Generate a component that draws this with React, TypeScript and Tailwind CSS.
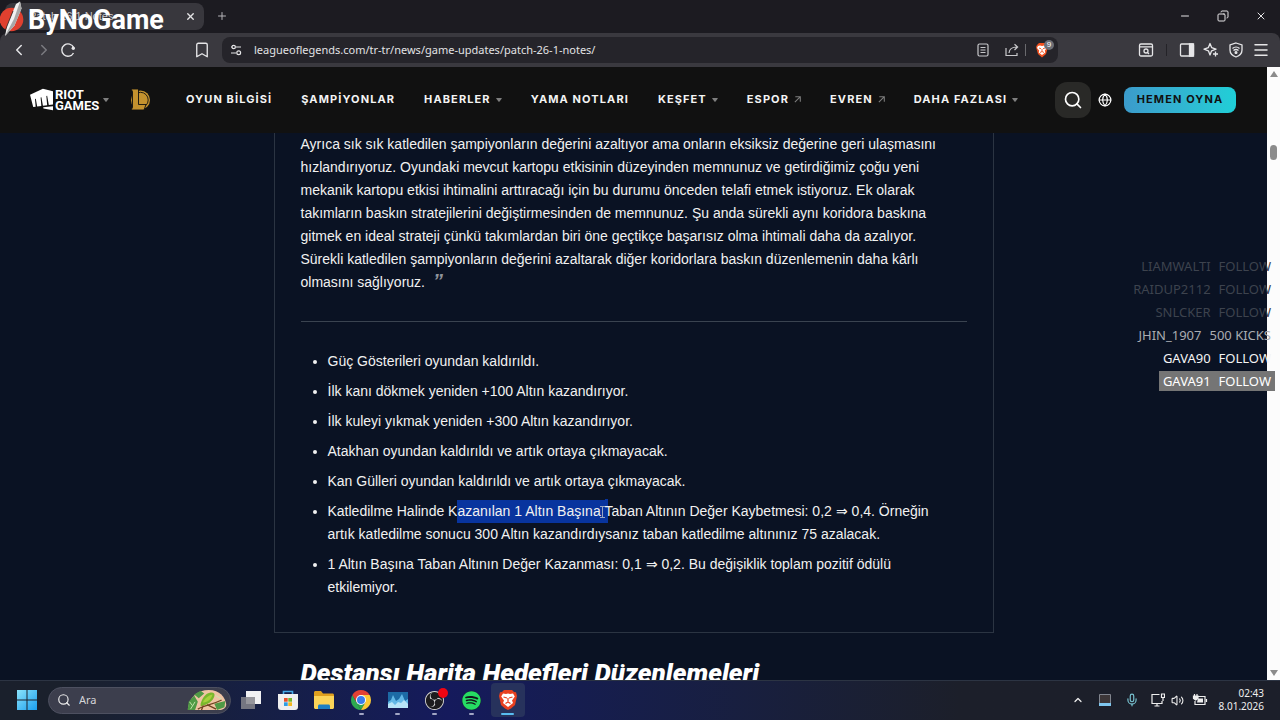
import type { ReactNode } from 'react';
import {
	Bookmark,
	ChevronLeft,
	ChevronRight,
	ChevronUp,
	Copy,
	Globe,
	Menu,
	Mic,
	Minus,
	Plus,
	Search,
	Volume2,
	X,
} from 'lucide-react';
import { FaSpotify } from 'react-icons/fa';
import { SiObsstudio, SiRiotgames } from 'react-icons/si';

type NavItem = {
	label: string;
	kind?: 'menu' | 'external';
};

const navItems: NavItem[] = [
	{ label: 'OYUN BİLGİSİ' },
	{ label: 'ŞAMPİYONLAR' },
	{ label: 'HABERLER', kind: 'menu' },
	{ label: 'YAMA NOTLARI' },
	{ label: 'KEŞFET', kind: 'menu' },
	{ label: 'ESPOR', kind: 'external' },
	{ label: 'EVREN', kind: 'external' },
	{ label: 'DAHA FAZLASI', kind: 'menu' },
];

const quoteLines = [
	'Ayrıca sık sık katledilen şampiyonların değerini azaltıyor ama onların eksiksiz değerine geri ulaşmasını',
	'hızlandırıyoruz. Oyundaki mevcut kartopu etkisinin düzeyinden memnunuz ve getirdiğimiz çoğu yeni',
	'mekanik kartopu etkisi ihtimalini arttıracağı için bu durumu önceden telafi etmek istiyoruz. Ek olarak',
	'takımların baskın stratejilerini değiştirmesinden de memnunuz. Şu anda sürekli aynı koridora baskına',
	'gitmek en ideal strateji çünkü takımlardan biri öne geçtikçe başarısız olma ihtimali daha da azalıyor.',
	'Sürekli katledilen şampiyonların değerini azaltarak diğer koridorlara baskın düzenlemenin daha kârlı',
];

const events = [
	{ user: 'LIAMWALTI', action: 'FOLLOW', className: 'text-[#3d434e]' },
	{ user: 'RAIDUP2112', action: 'FOLLOW', className: 'text-[#3d434e]' },
	{ user: 'SNLCKER', action: 'FOLLOW', className: 'text-[#3d434e]' },
	{ user: 'JHIN_1907', action: '500 KICKS', className: 'text-[#a9acb1]' },
	{ user: 'GAVA90', action: 'FOLLOW', className: 'text-[#f4f4f4]' },
	{ user: 'GAVA91', action: 'FOLLOW', className: 'bg-[#757575] text-white' },
];

const Caret = () => (
	<svg viewBox="0 0 7 5" className="h-1 w-[6px] shrink-0" fill="#7e7e7e">
		<path d="M.6 0h5.800c.5 0 .7.6.4 1L4 4.600c-.3.3-.7.3-1 0L.2 1C-.1.600.1 0 .6 0z" />
	</svg>
);

const ExternalArrow = () => (
	<svg viewBox="0 0 8 8" className="h-[7px] w-[7px] shrink-0" fill="none" stroke="#7e7e7e" strokeWidth="1.200">
		<path d="M1 7l6-6M1.500 .8h5.700v5.700" />
	</svg>
);

const StreamLogo = () => (
	<div className="pointer-events-none absolute left-0 top-0 flex items-center">
		<svg viewBox="0 0 28 36" className="h-9 w-7 shrink-0">
			<circle cx="11.500" cy="18.500" r="11.800" fill="#e0402f" />
			<path d="M16 3l4-2.500 1.500 7-7 17L5 35l2-10z" fill="#f2f2f2" />
			<path d="M20 .5l1.500 7-7 17L5 35l9-17z" fill="#a8a8a8" />
			<path d="M13 10L5 30" stroke="#222" strokeWidth=".8" />
		</svg>
		<span className="pt-[2px] font-[Roboto,sans-serif] text-[27px] leading-9 font-bold text-white">ByNoGame</span>
	</div>
);

const TabBar = () => (
	<div className="flex h-[33px] items-start bg-[#1c1b21] text-[#e4e4e6]">
		<div className="mt-[3px] ml-[5px] flex h-[27px] w-[199px] items-center justify-between rounded-lg bg-[#38373d] pr-2 pl-6">
			<span className="text-[11px] text-[#c9c9cc]">Patch 26.1 Notes</span>
			<button aria-label="Sekmeyi kapat">
				<X className="h-[11px] w-[11px]" strokeWidth={3} />
			</button>
		</div>
		<button aria-label="Yeni sekme" className="mt-[10px] ml-3">
			<Plus className="h-3 w-3 text-[#b4b4b8]" />
		</button>
		<div className="mt-[10px] mr-[13px] ml-auto flex gap-[26px]">
			<button aria-label="Simge durumuna küçült"><Minus className="h-3 w-3" /></button>
			<button aria-label="Geri yükle"><Copy className="h-3 w-3 -scale-x-100" /></button>
			<button aria-label="Kapat"><X className="h-3 w-3" /></button>
		</div>
	</div>
);

const Toolbar = () => (
	<div className="bg-[#1c1b21]">
		<div className="flex h-[34px] items-center rounded-t-lg bg-[#3a393f] px-[10px] text-[#e6e6e8]">
			<button aria-label="Geri"><ChevronLeft className="h-[18px] w-[18px]" /></button>
			<button aria-label="İleri" className="ml-[7px] text-[#7b7b80]"><ChevronRight className="h-[18px] w-[18px]" /></button>
			<button aria-label="Yenile" className="ml-[7px]">
				<svg viewBox="0 0 16 16" className="h-4 w-4" fill="none" stroke="currentColor" strokeWidth="1.400">
					<path d="M13.500 11a6.200 6.200 0 1 1 .2-5.400" />
					<circle cx="13.300" cy="6.300" r="1.700" fill="currentColor" stroke="none" />
				</svg>
			</button>
			<button aria-label="Yer işareti" className="ml-[117px]"><Bookmark className="h-[18px] w-[18px]" strokeWidth={1.8} /></button>
			<div className="ml-[11px] flex h-[26px] flex-1 items-center rounded-lg bg-[#25242a] pr-0 pl-2">
				<svg viewBox="0 0 12 12" className="h-3 w-3 shrink-0" fill="none" stroke="currentColor" strokeWidth="1.200">
					<path d="M1 3h1M6 3h5M1 9h5" />
					<circle cx="3.700" cy="3" r="1.700" />
					<circle cx="8.700" cy="8.800" r="1.900" />
				</svg>
				<input
					aria-label="Adres çubuğu"
					readOnly
					value="leagueoflegends.com/tr-tr/news/game-updates/patch-26-1-notes/"
					className="ml-3 min-w-0 flex-1 bg-transparent font-['Noto_Sans',sans-serif] text-[11px] text-[#e2e2e4] outline-none"
				/>
				<button aria-label="Okuma modu">
					<svg viewBox="0 0 12 14" className="h-[14px] w-3" fill="none" stroke="#c8c8cb" strokeWidth="1.200">
						<rect x="1" y="1" width="10" height="12" rx="1.500" />
						<path d="M3.500 4.500h5M3.500 7h5M3.500 9.500h5" />
					</svg>
				</button>
				<button aria-label="Paylaş" className="ml-4">
					<svg viewBox="0 0 14 14" className="h-[14px] w-[14px]" fill="none" stroke="#c8c8cb" strokeWidth="1.200">
						<path d="M1 5v7.500h11V10M4 10c.3-4 3-6 8-6M9.500 1.200L12.600 4 9.500 7" />
					</svg>
				</button>
				<span className="ml-[6px] h-3 w-px bg-[#6a6a6e]" />
				<button aria-label="Brave Shields" className="relative ml-[9px] pr-[9px]">
					<svg viewBox="0 0 14 16" className="h-4 w-[14px]">
						<path d="M4 1h6l2 2 1 2-2 7-4 3.500L3 12 1 5l1-2z" fill="#f1511f" />
						<path d="M3 4l2-.5 2 .5 2-.5L11 4l1 2-2.200 2.500.5 2L7 13l-3.300-2.500.5-2L2 6z" fill="#fff" />
						<path d="M4 6l2 .7M10 6l-2 .7M7 7v2.500M5 10.500l2-1 2 1" stroke="#f1511f" strokeWidth=".9" fill="none" />
					</svg>
					<span className="absolute -top-[2px] right-1 flex h-[10px] w-[10px] items-center justify-center rounded-full bg-[#6d6f76] text-[8px] leading-none text-white">9</span>
				</button>
			</div>
			<div className="ml-20 flex items-center">
				<button aria-label="Sekme ara">
					<svg viewBox="0 0 16 16" className="h-4 w-4" fill="none" stroke="currentColor" strokeWidth="1.300">
						<rect x="1.500" y="2" width="13" height="12" rx="1.500" />
						<path d="M2 4.800h12M9.500 10.500l1.500 1.500" />
						<circle cx="8" cy="9" r="2" />
					</svg>
				</button>
				<span className="ml-3 h-3 w-px bg-[#242328]" />
				<button aria-label="Kenar çubuğu" className="ml-3">
					<svg viewBox="0 0 16 16" className="h-4 w-4" fill="none" stroke="currentColor" strokeWidth="1.300">
						<rect x="1.500" y="2" width="13" height="12" rx="1" />
						<path d="M10.500 2h4v12h-4z" fill="currentColor" />
					</svg>
				</button>
				<button aria-label="Leo" className="ml-2">
					<svg viewBox="0 0 16 16" className="h-4 w-4" fill="none" stroke="currentColor" strokeWidth="1.300">
						<path d="M7 1.500L8.600 5.600 13 7.200 8.600 8.800 7 13 5.400 8.800 1 7.200l4.400-1.600z" strokeLinejoin="round" />
						<path d="M12.500 9.500v5M10 12h5" />
					</svg>
				</button>
				<button aria-label="VPN" className="ml-[9px]">
					<svg viewBox="0 0 16 16" className="h-4 w-4" fill="none" stroke="currentColor" strokeWidth="1.300">
						<path d="M8 1l6 2v5c0 3.500-2.500 5.800-6 7-3.500-1.200-6-3.500-6-7V3z" />
						<path d="M4.500 6.500c2-1.800 5-1.800 7 0M5.500 8.500c1.500-1.200 3.500-1.200 5 0" />
						<circle cx="8" cy="10.500" r=".9" fill="currentColor" />
					</svg>
				</button>
				<button aria-label="Menü" className="ml-2"><Menu className="h-[18px] w-[18px]" /></button>
			</div>
		</div>
	</div>
);

const SiteHeader = () => (
	<header className="flex h-[66px] shrink-0 items-center bg-[#111] pr-[31px] pb-px pl-[30px] font-[Inter,sans-serif]">
		<a href="#riot" className="flex items-center text-white">
			<SiRiotgames className="h-[23px] w-[23px]" />
			<span className="ml-[2px] w-[45px] font-[Roboto,sans-serif] text-[13px] leading-[11px] font-bold">
				RIOT
				<br />
				GAMES
			</span>
			<span className="ml-[3px]"><Caret /></span>
		</a>
		<a href="#lol" aria-label="League of Legends" className="ml-5">
			<svg viewBox="0 0 22 24" className="h-6 w-[22px]">
				<circle cx="11.500" cy="12" r="9.500" fill="#c4922e" />
				<circle cx="11.500" cy="12" r="7.700" fill="none" stroke="#111" strokeWidth=".9" />
				<path d="M2 1h7.500v15.500H17l-2 5.500H2l1.500-2.500v-16z" fill="#c4922e" stroke="#111" strokeWidth=".9" />
			</svg>
		</a>
		<nav className="ml-[35px] flex items-center gap-[29px]">
			{navItems.map((item) => (
				<a
					key={item.label}
					href="#nav"
					className="flex items-center gap-[5px] text-[11px] font-bold tracking-widest whitespace-nowrap text-[#f4f4f4]"
				>
					{item.label}
					{item.kind === 'menu' && <Caret />}
					{item.kind === 'external' && <ExternalArrow />}
				</a>
			))}
		</nav>
		<div className="ml-auto flex items-center">
			<button aria-label="Ara" className="flex h-9 w-9 items-center justify-center rounded-xl bg-[#292927]">
				<Search className="h-5 w-5 text-white" />
			</button>
			<button aria-label="Dil" className="ml-[7px]"><Globe className="h-[14px] w-[14px] text-white" /></button>
			<button className="ml-3 h-[26px] w-28 rounded-lg bg-gradient-to-r from-[#3b9bcb] to-[#1fcfd7] text-[11px] font-bold tracking-widest text-[#111]">
				HEMEN OYNA
			</button>
		</div>
	</header>
);

const Article = () => (
	<main className="min-h-0 flex-1 overflow-hidden text-[14px] leading-[23px] text-[#f1f1f1]">
		<div className="mx-auto w-[720px]">
			<section className="border-x border-b border-[#2b3442] px-[26px] pb-[33px]">
				<blockquote className="whitespace-nowrap">
					{quoteLines.map((line) => (
						<span key={line} className="block">{line}</span>
					))}
					olmasını sağlıyoruz. <span className="ml-1 align-top text-[20px] leading-none font-bold text-[#8f949c] italic">”</span>
				</blockquote>
				<hr className="mt-[27px] mb-7 border-[#3a4350]" />
				<ul className="flex list-disc flex-col gap-[7px] pl-[27px] whitespace-nowrap">
					<li>Güç Gösterileri oyundan kaldırıldı.</li>
					<li>İlk kanı dökmek yeniden +100 Altın kazandırıyor.</li>
					<li>İlk kuleyi yıkmak yeniden +300 Altın kazandırıyor.</li>
					<li>Atakhan oyundan kaldırıldı ve artık ortaya çıkmayacak.</li>
					<li>Kan Gülleri oyundan kaldırıldı ve artık ortaya çıkmayacak.</li>
					<li>
						Katledilme Halinde K
						<span className="relative inline-block bg-[#08349e]">
							azanılan 1 Altın Başına&nbsp;
							<svg viewBox="0 0 5 12" className="absolute top-[6px] right-0 h-3 w-[5px]" fill="none" stroke="#9aa7c4">
								<path d="M0 .5h5M0 11.500h5M2.500 .5v11" />
							</svg>
						</span>
						<span className="bg-linear-to-r from-[#08349e] from-50% to-transparent to-50% py-[4px]">T</span>
						aban Altının Değer Kaybetmesi: 0,2 ⇒ 0,4. Örneğin
						<br />
						artık katledilme sonucu 300 Altın kazandırdıysanız taban katledilme altınınız 75 azalacak.
					</li>
					<li>
						1 Altın Başına Taban Altının Değer Kazanması: 0,1 ⇒ 0,2. Bu değişiklik toplam pozitif ödülü
						<br />
						etkilemiyor.
					</li>
				</ul>
			</section>
			<h2 className="mt-6 pl-[27px] font-[Roboto,sans-serif] text-[26px] leading-8 font-black text-white italic">
				Destansı Harita Hedefleri Düzenlemeleri
			</h2>
		</div>
	</main>
);

const Scrollbar = () => (
	<div className="flex w-[13px] shrink-0 flex-col items-center justify-between bg-[#fcfcfc] py-1">
		<div className="flex flex-col items-center">
			<svg viewBox="0 0 8 6" className="h-[6px] w-2" fill="#8b8b8b"><path d="M4 0l4 6H0z" /></svg>
			<span className="mt-[68px] h-[15px] w-[7px] rounded-full bg-[#8b8b8b]" />
		</div>
		<svg viewBox="0 0 8 6" className="h-[6px] w-2" fill="#8b8b8b"><path d="M4 6l4-6H0z" /></svg>
	</div>
);

const EventFeed = () => (
	<ul className="absolute top-64 right-[5px] flex flex-col items-end gap-[3px] font-['Noto_Sans',sans-serif] text-[13px] leading-5">
		{events.map((e) => (
			<li key={e.user} className={`flex gap-2 px-1 ${e.className}`}>
				<span>{e.user}</span>
				<span>{e.action}</span>
			</li>
		))}
	</ul>
);

const TaskIcon = ({ label, state, children }: { label: string; state?: 'open' | 'active'; children: ReactNode }) => (
	<button
		aria-label={label}
		className={`relative flex h-[34px] w-[34px] items-center justify-center rounded ${state === 'active' ? 'bg-[#27325c]' : ''}`}
	>
		{children}
		{state === 'open' && <span className="absolute bottom-[2px] h-[2px] w-[5px] rounded-full bg-[#a2a6c4]" />}
		{state === 'active' && <span className="absolute bottom-[2px] h-[2px] w-[13px] rounded-full bg-[#58bdf0]" />}
	</button>
);

const Taskbar = () => (
	<footer className="relative z-10 flex h-10 shrink-0 items-center border-t border-[#2c3443] bg-linear-to-r from-[#1a202c] from-5% via-[#151a5c] via-35% to-[#1c1f2a] to-75% pr-4 pb-px pl-[17px] font-['Noto_Sans',sans-serif] text-[#eee]">
		<button aria-label="Başlat">
			<svg viewBox="0 0 20 20" className="h-5 w-5">
				<defs>
					<linearGradient id="win" x1="0" y1="0" x2="1" y2="1">
						<stop offset="0" stopColor="#8be3fb" />
						<stop offset="1" stopColor="#1a9eee" />
					</linearGradient>
				</defs>
				<path d="M0 0h9.500v9.500H0zM10.500 0H20v9.500h-9.500zM0 10.500h9.500V20H0zM10.500 10.500H20V20h-9.500z" fill="url(#win)" />
			</svg>
		</button>
		<div className="ml-[11px] flex h-[27px] w-[183px] items-center overflow-hidden rounded-full border border-[#4d5060] bg-[#3c3e4d] pl-2">
			<Search className="h-[14px] w-[14px] shrink-0" />
			<input
				aria-label="Ara"
				placeholder="Ara"
				className="ml-2 min-w-0 flex-1 bg-transparent text-[11px] outline-none placeholder:text-[#d4d4d8]"
			/>
			<svg viewBox="0 0 44 24" className="mr-[2px] h-[22px] w-[42px] shrink-0">
				<path d="M1 22C3 8 12 1 24 1s18 8 19 16c0 4-4 6-8 6H2z" fill="#efc4a4" />
				<path d="M2 14l6-7 4 7-3 9H1zM8 6l7-4 4 3-6 5zM30 16l12-3-1 7-8 3z" fill="#4f9a45" />
				<path d="M15 16c2-6 5-11 10-12 4-1 6 1 5 4-2 6-7 9-15 11z" fill="#79b82c" />
				<path d="M18 13c3-4 6-6 10-7-1 5-5 8-10 9z" fill="#a6d13c" />
				<path d="M12 22c8-5 14-4 26-10M22 17l10 5M18 18l-2 5" stroke="#6e4420" strokeWidth="1.500" fill="none" />
				<path d="M4 22l5-8M6 18l-3-4M31 7l7 4" stroke="#c9e9b0" strokeWidth="1" />
			</svg>
		</div>
		<div className="ml-[3px] flex w-[291px] items-center justify-between">
			<TaskIcon label="Görev görünümü">
				<svg viewBox="0 0 20 20" className="h-5 w-5">
					<path d="M5 1h15v13H5z" fill="#f1f1f3" />
					<path d="M0 7h14v12H0z" fill="#86868c" fillOpacity=".85" />
				</svg>
			</TaskIcon>
			<TaskIcon label="Microsoft Store">
				<svg viewBox="0 0 20 20" className="h-5 w-5">
					<path d="M5.500 5V1.500h9V5" stroke="#45a9e6" strokeWidth="1.600" fill="none" />
					<path d="M0 4h20v13a3 3 0 0 1-3 3H3a3 3 0 0 1-3-3z" fill="#efefef" />
					<path d="M6 8h3.700v3.700H6z" fill="#e8502a" />
					<path d="M10.300 8H14v3.700h-3.700z" fill="#74b52b" />
					<path d="M6 12.300h3.700V16H6z" fill="#2d9de2" />
					<path d="M10.300 12.300H14V16h-3.700z" fill="#f5b81e" />
				</svg>
			</TaskIcon>
			<TaskIcon label="Dosya Gezgini">
				<svg viewBox="0 0 20 18" className="h-[18px] w-5">
					<path d="M0 1.500C0 .7.700 0 1.500 0H7l2 2.500h9.500c.8 0 1.500.7 1.500 1.500v4H0z" fill="#dfa01e" />
					<path d="M0 5h20v11.500c0 .8-.7 1.500-1.500 1.500h-17C.7 18 0 17.300 0 16.500z" fill="#fbd458" />
					<path d="M4 18v-3c0-.8.600-1.500 1.500-1.500h9c.9 0 1.500.7 1.500 1.500v3z" fill="#1c7fc4" />
				</svg>
			</TaskIcon>
			<TaskIcon label="Chrome" state="open">
				<svg viewBox="0 0 20 20" className="h-5 w-5">
					<path d="M1.340 5l4.330 7.500L10 20A10 10 0 0 1 1.340 5z" fill="#2da94f" />
					<path d="M5.670 12.500L10 20l4.330-7.500z" fill="#2da94f" />
					<path d="M10 5h8.660A10 10 0 0 1 10 20l4.330-7.500z" fill="#fcc934" />
					<path d="M1.340 5A10 10 0 0 1 18.660 5H10l-4.330 7.500z" fill="#e34133" />
					<circle cx="10" cy="10" r="5" fill="#fff" />
					<circle cx="10" cy="10" r="4" fill="#3b7ded" />
				</svg>
			</TaskIcon>
			<TaskIcon label="Görev Yöneticisi" state="open">
				<svg viewBox="0 0 20 16" className="h-4 w-5">
					<path d="M0 0h20v16H0z" fill="#1c6aa5" />
					<path d="M0 10l3-2 2-5 3 6 3-2 3-5 3 7 3-2v9H0z" fill="#63b8e6" />
					<path d="M0 12l4-2 3 3 3-3 3 1 3-3 4 4v4H0z" fill="#b8e4f7" />
				</svg>
			</TaskIcon>
			<TaskIcon label="OBS Studio" state="open">
				<span className="flex h-[19px] w-[19px] items-center justify-center rounded-full bg-[#1d1c1f]">
					<SiObsstudio className="h-[19px] w-[19px] text-[#d4d4d6]" />
				</span>
				<span className="absolute top-[5px] right-[4px] h-[10px] w-[10px] rounded-full bg-[#f00512]" />
			</TaskIcon>
			<TaskIcon label="Spotify" state="open">
				<span className="rounded-full bg-[#12151a]"><FaSpotify className="h-[19px] w-[19px] text-[#26dc64]" /></span>
			</TaskIcon>
			<TaskIcon label="Brave" state="active">
				<svg viewBox="0 0 18 20" className="h-5 w-[18px]">
					<path d="M5 0h8l2 2 2 .3L18 6l-2 9-4 3.500L9 20l-3-1.500L2 15 0 6l1-3.700L3 2z" fill="#e8401f" />
					<path d="M4 3.500l3 .5 2-.5 2 .5 3-.5 1.800 3-2.800 4 1 2.500L9 17l-5-4 1-2.500-2.800-4z" fill="#fff" />
					<path d="M4.500 7L8 8M13.500 7L10 8M9 8v4M6.500 13.500L9 12l2.500 1.500" stroke="#e8401f" strokeWidth="1.200" fill="none" />
				</svg>
			</TaskIcon>
		</div>
		<div className="ml-auto flex items-center">
			<button aria-label="Gizli simgeler"><ChevronUp className="h-3 w-3" strokeWidth={2.5} /></button>
			<svg viewBox="0 0 12 12" className="ml-[15px] h-3 w-3">
				<path d="M.5 .5h11v11H.5z" fill="#3c3638" stroke="#81858e" />
				<path d="M0 9h12v3H0z" fill="#7fc6ee" />
			</svg>
			<Mic className="ml-[14px] h-[14px] w-[14px] text-[#79c4d2]" />
			<svg viewBox="0 0 14 14" className="ml-3 h-[14px] w-[14px]" fill="none" stroke="currentColor" strokeWidth="1.200">
				<path d="M8.500 1.500H1v9h10V8M6 10.500V13M3.500 13h5" />
				<path d="M10.500 1h3v3.500h-3zM12 4.500V8" />
			</svg>
			<Volume2 className="ml-[6px] h-[13px] w-[13px]" />
			<svg viewBox="0 0 16 14" className="ml-2 h-[14px] w-4" fill="none" stroke="currentColor" strokeWidth="1.200">
				<path d="M6 3.500h7v8H3V8M14.500 6v3" />
				<path d="M6 5.500h5v4H5z" fill="currentColor" stroke="none" />
				<path d="M2.500 1v2M5 1v2M1.500 3h4.500v2.500L3.700 7 1.500 5.500z" fill="currentColor" />
			</svg>
			<div className="ml-[10px] w-[46px] text-right text-[10px] leading-[13px] whitespace-nowrap">
				<div>02:43</div>
				<div>8.01.2026</div>
			</div>
		</div>
	</footer>
);

export default function App() {
	return (
		<div className="relative flex h-screen flex-col overflow-hidden bg-[#0a1223] font-['Liberation_Sans',sans-serif]">
			<TabBar />
			<Toolbar />
			<div className="flex min-h-0 flex-1">
				<div className="flex min-w-0 flex-1 flex-col">
					<SiteHeader />
					<Article />
				</div>
				<Scrollbar />
			</div>
			<Taskbar />
			<EventFeed />
			<StreamLogo />
		</div>
	);
}
